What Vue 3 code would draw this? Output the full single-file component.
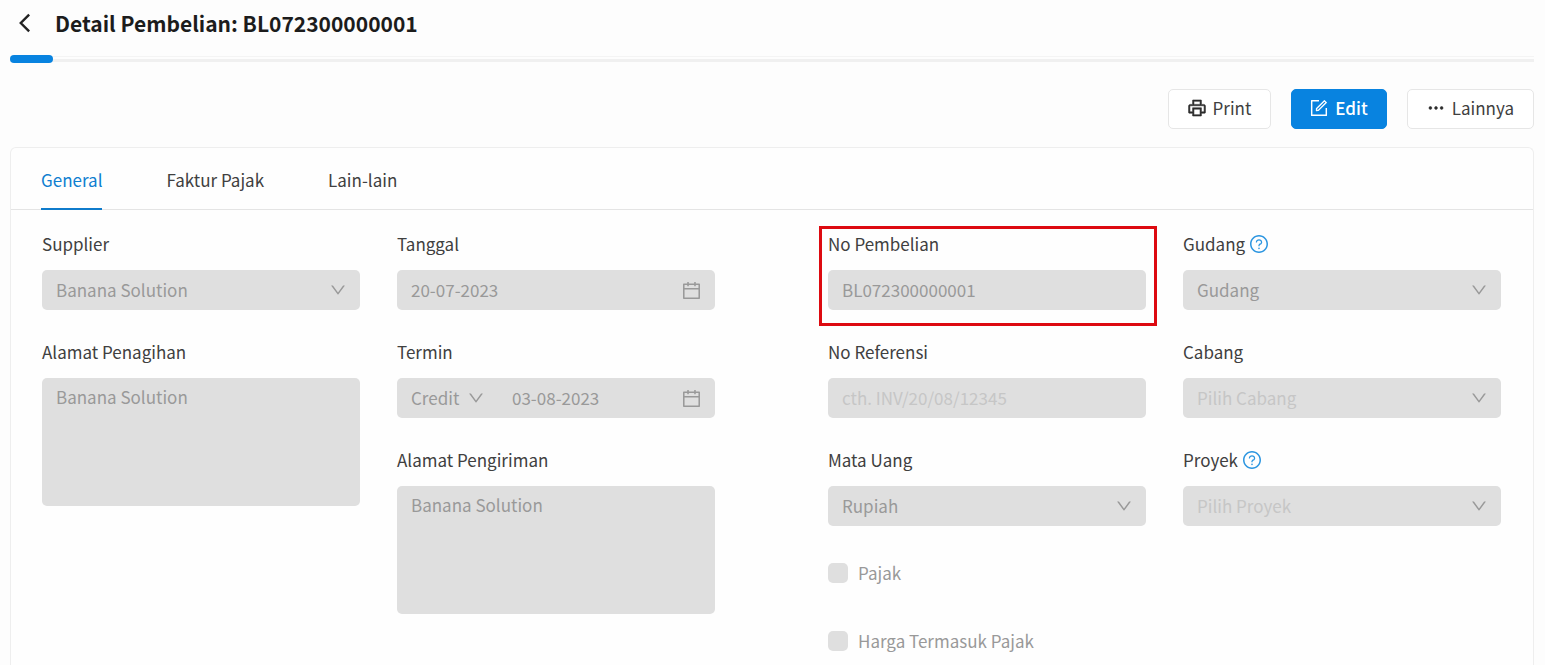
<script setup>
import { h } from 'vue'

const paths = {
  down: 'M884 256h-75c-5.100 0-9.900 2.500-12.900 6.600L512 654.200 227.900 262.600c-3-4.100-7.800-6.600-12.900-6.600h-75c-6.500 0-10.300 7.400-6.500 12.700l352.600 486.100c12.800 17.600 39 17.600 51.700 0l352.600-486.100c3.900-5.300.1-12.700-6.400-12.700z',
  calendar: 'M880 184H712v-64c0-4.400-3.600-8-8-8h-56c-4.400 0-8 3.600-8 8v64H384v-64c0-4.400-3.600-8-8-8h-56c-4.400 0-8 3.600-8 8v64H144c-17.700 0-32 14.300-32 32v664c0 17.700 14.300 32 32 32h736c17.700 0 32-14.300 32-32V216c0-17.700-14.300-32-32-32zm-40 656H184V460h656v380zM184 392V256h128v48c0 4.400 3.600 8 8 8h56c4.400 0 8-3.600 8-8v-48h256v48c0 4.400 3.600 8 8 8h56c4.400 0 8-3.600 8-8v-48h128v136H184z',
  printer: 'M852 332H732V120c0-4.400-3.600-8-8-8H300c-4.400 0-8 3.600-8 8v212H172c-44.200 0-80 35.800-80 80v328c0 17.700 14.300 32 32 32h168v132c0 4.400 3.600 8 8 8h424c4.400 0 8-3.600 8-8V772h168c17.700 0 32-14.300 32-32V412c0-44.200-35.800-80-80-80zM360 180h304v152H360V180zm304 664H360V568h304v276zm200-140H732V500H292v204H160V412c0-6.600 5.400-12 12-12h680c6.600 0 12 5.400 12 12v292z',
  form: 'M904 512h-56c-4.400 0-8 3.600-8 8v320H184V184h320c4.400 0 8-3.600 8-8v-56c0-4.400-3.600-8-8-8H144c-17.700 0-32 14.300-32 32v736c0 17.700 14.300 32 32 32h736c17.700 0 32-14.300 32-32V520c0-4.400-3.600-8-8-8zM355.900 534.900L354 653.800c-.1 8.900 7.100 16.200 16 16.200h.4l118-2.900c2-.1 4-.9 5.400-2.300l415.900-415c3.100-3.100 3.100-8.200 0-11.300L785.400 114.300c-1.600-1.600-3.600-2.300-5.700-2.300s-4.100.8-5.700 2.300l-415.800 415a8.300 8.300 0 00-2.300 5.600zm63.500 23.600L779.700 199l45.200 45.100-360.500 359.700-45.700 1.100.7-46.400z',
  dots: 'M232 442a70 70 0 100 140 70 70 0 100-140zm280 0a70 70 0 100 140 70 70 0 100-140zm280 0a70 70 0 100 140 70 70 0 100-140z',
  help: 'M512 64C264.600 64 64 264.600 64 512s200.600 448 448 448 448-200.600 448-448S759.400 64 512 64zm0 820c-205.400 0-372-166.600-372-372s166.600-372 372-372 372 166.600 372 372-166.600 372-372 372zM623.600 316.700C593.600 290.400 554 276 512 276s-81.600 14.500-111.600 40.700C369.200 344 352 380.700 352 420v7.600c0 4.400 3.600 8 8 8h48c4.400 0 8-3.600 8-8V420c0-44.100 43.100-80 96-80s96 35.900 96 80c0 31.100-22 59.600-56.100 72.700-21.200 8.100-39.200 22.300-52.100 40.900-13.100 19-19.900 41.800-19.900 64.900V620c0 4.400 3.600 8 8 8h48c4.400 0 8-3.600 8-8v-22.700a48.300 48.300 0 0130.900-44.800c59-22.700 97.100-74.700 97.100-132.500.1-39.300-17.100-76-48.300-103.300zM472 732a40 40 0 1080 0 40 40 0 10-80 0z',
}

const Icon = (props) =>
  h('svg', { viewBox: '64 64 896 896', fill: 'currentColor', 'aria-hidden': 'true' }, [
    h('path', { d: paths[props.name] }),
  ])
Icon.props = ['name']

const tabs = ['General', 'Faktur Pajak', 'Lain-lain']

const columns = [
  [
    { id: 'supplier', label: 'Supplier', type: 'select', value: 'Banana Solution' },
    { id: 'alamat-penagihan', label: 'Alamat Penagihan', type: 'area', value: 'Banana Solution' },
  ],
  [
    { id: 'tanggal', label: 'Tanggal', type: 'date', value: '20-07-2023' },
    { id: 'termin', label: 'Termin', type: 'term', term: 'Credit', value: '03-08-2023' },
    { id: 'alamat-pengiriman', label: 'Alamat Pengiriman', type: 'area', value: 'Banana Solution' },
  ],
  [
    { id: 'no-pembelian', label: 'No Pembelian', type: 'text', value: 'BL072300000001', marked: true },
    { id: 'no-referensi', label: 'No Referensi', type: 'text', value: '', placeholder: 'cth. INV/20/08/12345' },
    { id: 'mata-uang', label: 'Mata Uang', type: 'select', value: 'Rupiah' },
    { id: 'pajak', label: 'Pajak', type: 'check' },
    { id: 'harga-termasuk-pajak', label: 'Harga Termasuk Pajak', type: 'check' },
  ],
  [
    { id: 'gudang', label: 'Gudang', type: 'select', value: 'Gudang', help: true },
    { id: 'cabang', label: 'Cabang', type: 'select', value: 'Pilih Cabang', empty: true },
    { id: 'proyek', label: 'Proyek', type: 'select', value: 'Pilih Proyek', empty: true, help: true },
  ],
]
const halves = [columns.slice(0, 2), columns.slice(2)]
</script>

<template>
  <div class="page">
    <header class="header">
      <button class="back" type="button" aria-label="Kembali">
        <svg viewBox="0 0 14 20" fill="none" stroke="currentColor" stroke-width="2.600">
          <path d="M12 1 3 10l9 9" />
        </svg>
      </button>
      <h1>Detail Pembelian: BL072300000001</h1>
    </header>

    <div class="progress"><span class="progress-bar"></span></div>

    <div class="actions">
      <button class="btn" type="button"><Icon name="printer" class="btn-icon heavy" />Print</button>
      <button class="btn primary" type="button"><Icon name="form" class="btn-icon" />Edit</button>
      <button class="btn" type="button"><Icon name="dots" class="btn-icon heavy" />Lainnya</button>
    </div>

    <main class="card">
      <nav class="tabs" role="tablist">
        <button
          v-for="(tab, i) in tabs"
          :key="tab"
          type="button"
          role="tab"
          class="tab"
          :class="{ active: i === 0 }"
          :aria-selected="i === 0"
        >{{ tab }}</button>
      </nav>

      <form class="form">
        <div v-for="(half, hi) in halves" :key="hi" class="half">
          <div v-for="(col, ci) in half" :key="ci" class="column">
            <div
              v-for="f in col"
              :key="f.id"
              class="field"
              :class="{ marked: f.marked, check: f.type === 'check' }"
            >
              <template v-if="f.type === 'check'">
                <input :id="f.id" type="checkbox" class="box" disabled />
                <label :for="f.id">{{ f.label }}</label>
              </template>
              <template v-else>
                <div class="label-row">
                  <label :for="f.id">{{ f.label }}</label>
                  <Icon v-if="f.help" name="help" class="help" />
                </div>
                <textarea v-if="f.type === 'area'" :id="f.id" class="control area" :value="f.value" disabled></textarea>
                <div v-else class="control">
                  <select v-if="f.type === 'select'" :id="f.id" class="entry" :class="{ empty: f.empty }" disabled>
                    <option>{{ f.value }}</option>
                  </select>
                  <template v-else-if="f.type === 'term'">
                    <select class="term" aria-label="Jenis termin" disabled>
                      <option>{{ f.term }}</option>
                    </select>
                    <Icon name="down" class="chevron term-chevron" />
                    <input :id="f.id" class="entry" type="text" :value="f.value" disabled />
                  </template>
                  <input v-else :id="f.id" class="entry" type="text" :value="f.value" :placeholder="f.placeholder" disabled />
                  <Icon v-if="f.type === 'select'" name="down" class="chevron" />
                  <Icon v-if="f.type === 'date' || f.type === 'term'" name="calendar" class="calendar" />
                </div>
              </template>
            </div>
          </div>
        </div>
      </form>
    </main>
  </div>
</template>

<style>
body {
  background: #fdfdfd;
}
</style>

<style scoped>
.page {
  box-sizing: border-box;
  display: flex;
  flex-direction: column;
  min-height: 100vh;
  padding: 0 11px 0 10px;
  font: 17px/24px "Noto Sans CJK SC", "Noto Sans", sans-serif;
  color: #404040;
}
button,
input,
select,
textarea {
  font: inherit;
}
.header {
  display: flex;
  align-items: center;
  gap: 24px;
  height: 46px;
  padding-left: 8px;
}
.back {
  display: flex;
  padding: 0;
  border: 0;
  background: none;
  color: #222;
}
.back svg {
  width: 13px;
  height: 20px;
}
h1 {
  margin: 0;
  font-size: 21px;
  line-height: 32px;
  font-weight: 700;
  color: #1c1c1c;
}
.progress {
  display: flex;
  align-items: center;
  height: 8px;
  margin-top: 9px;
  background: linear-gradient(#f4f4f4, #f4f4f4) 0 1px / 100% 1px no-repeat,
    linear-gradient(#f0f0f0, #f0f0f0) 0 4px / 100% 3px no-repeat;
}
.progress-bar {
  width: 43px;
  height: 8px;
  border-radius: 4px;
  background: #0883e0;
}
.actions {
  display: flex;
  justify-content: flex-end;
  gap: 20px;
  margin: 26px 0 18px;
}
.btn {
  display: flex;
  align-items: center;
  gap: 7px;
  height: 40px;
  padding: 0 19px 2px;
  border: 1px solid #e6e6e6;
  border-radius: 5px;
  background: #fff;
  color: #404040;
}
.btn.primary {
  padding: 0 18px 2px;
  border-color: #0883e0;
  background: #0883e0;
  color: #fff;
  font-weight: 500;
}
.btn-icon {
  width: 18px;
  height: 18px;
}
.heavy {
  color: #2c2c2c;
  stroke: currentColor;
  stroke-width: 28px;
}
.card {
  flex: 1;
  border: 1px solid #eee;
  border-bottom: 0;
  border-radius: 6px 6px 0 0;
  background: #fefefe;
}
.tabs {
  display: flex;
  gap: 64px;
  height: 61px;
  padding: 0 30px;
  border-bottom: 1px solid #e4e4e4;
}
.tab {
  height: 62px;
  padding: 3px 0 0;
  border: 0;
  border-bottom: 2px solid transparent;
  background: none;
  color: #404040;
}
.tab.active {
  border-color: #0f7bcb;
  color: #0f7fd0;
}
.form {
  display: grid;
  grid-template-columns: repeat(2, minmax(0, 1fr));
  gap: 113px;
  padding: 22px 32px 12px 31px;
}
.half {
  display: grid;
  grid-template-columns: repeat(2, minmax(0, 1fr));
  gap: 37px;
}
.column {
  display: flex;
  flex-direction: column;
  gap: 30px;
}
.field {
  position: relative;
}
.marked::after {
  content: "";
  position: absolute;
  inset: -6px -11px -16px -9px;
  border: 3px solid #dd0a10;
}
.label-row {
  display: flex;
  align-items: center;
  gap: 5px;
  height: 24px;
  margin-bottom: 14px;
}
.help {
  width: 18px;
  height: 18px;
  color: #2b95e0;
}
.control {
  box-sizing: border-box;
  display: flex;
  align-items: center;
  width: 100%;
  height: 40px;
  padding: 0 14px;
  border: 0;
  border-radius: 5px;
  background: #dfdfdf;
  color: #999;
}
.area {
  display: block;
  height: 128px;
  padding: 7px 14px;
  resize: none;
}
.entry,
.term {
  appearance: none;
  min-width: 0;
  padding: 0;
  border: 0;
  background: none;
  color: #999;
  opacity: 1;
}
.entry {
  flex: 1;
}
.entry.empty,
.entry::placeholder {
  color: #c6c6c6;
}
.chevron {
  width: 16px;
  height: 16px;
}
.term {
  margin-right: 8px;
}
.term-chevron {
  margin-right: 28px;
}
.calendar {
  width: 19px;
  height: 19px;
}
.check {
  display: flex;
  align-items: center;
  gap: 10px;
  height: 34px;
  color: #999;
}
.check + .check {
  margin-top: 4px;
}
.box {
  appearance: none;
  width: 20px;
  height: 20px;
  margin: 0;
  border-radius: 5px;
  background: #dfdfdf;
}
</style>
